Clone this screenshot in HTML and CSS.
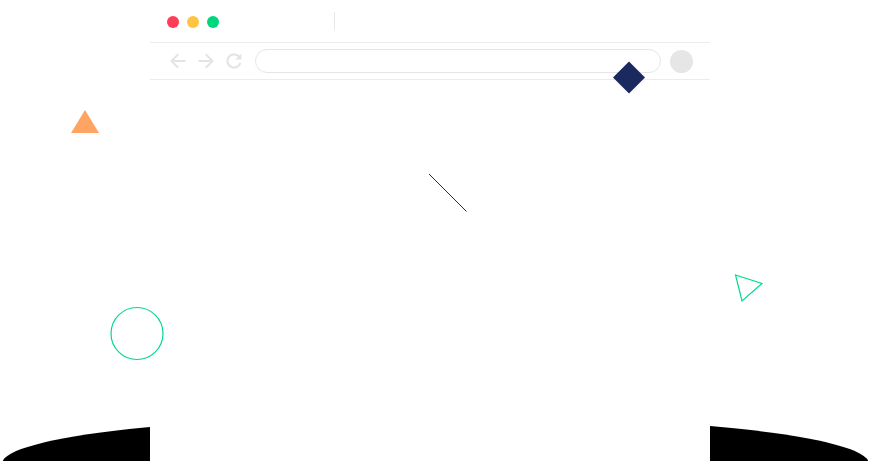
FILE: index.html
```html
<!DOCTYPE html>
<html lang="en">
<head>
<meta charset="utf-8">
<title>Browser mockup</title>
<link rel="stylesheet" href="styles.css">
</head>
<body>
<div class="stage">
  <svg class="ground" width="871" height="461" viewBox="0 0 871 461" aria-hidden="true">
    <ellipse cx="435.5" cy="463" rx="433" ry="48" fill="#000"/>
  </svg>

  <div class="browser">
    <div class="titlebar">
      <div class="dots">
        <span class="dot dot-red"></span>
        <span class="dot dot-yellow"></span>
        <span class="dot dot-green"></span>
      </div>
      <span class="tab-divider"></span>
    </div>
    <div class="toolbar">
      <div class="nav">
        <svg class="nav-icon" width="16" height="16" viewBox="0 0 16 16" aria-hidden="true">
          <path d="M15.5 8H1.5M8.2 1.3L1.5 8L8.2 14.7" fill="none" stroke="#e4e4e4" stroke-width="2"/>
        </svg>
        <svg class="nav-icon" width="16" height="16" viewBox="0 0 16 16" aria-hidden="true">
          <path d="M0.5 8H14.5M7.8 1.3L14.5 8L7.8 14.7" fill="none" stroke="#e4e4e4" stroke-width="2"/>
        </svg>
        <svg class="nav-icon" width="16" height="16" viewBox="0 0 16 16" aria-hidden="true">
          <path d="M14.4 9.8A6.6 6.6 0 1 1 13 3.6" fill="none" stroke="#e4e4e4" stroke-width="2.2"/>
          <path d="M15.4 0.6V6.6H9.4Z" fill="#e4e4e4"/>
        </svg>
      </div>
      <div class="address"></div>
      <span class="avatar"></span>
    </div>
  </div>

  <svg class="decor" width="871" height="461" viewBox="0 0 871 461" aria-hidden="true">
    <polygon points="85,110 71,133 99,133" fill="#ffa463"/>
    <polygon points="629,61.5 645,77.5 629,93.5 613,77.5" fill="#1b2a5e"/>
    <line x1="429" y1="174" x2="466.5" y2="211.5" stroke="#1b2a5e" stroke-width="1"/>
    <polygon points="735.5,275 762,283.5 742,301" fill="none" stroke="#00da8a" stroke-width="1.2"/>
    <circle cx="137" cy="333.5" r="26" fill="none" stroke="#00da8a" stroke-width="1.2"/>
  </svg>
</div>
</body>
</html>
```

FILE: styles.css
```css
html, body {
  margin: 0;
  padding: 0;
  background: #ffffff;
  overflow: hidden;
  font-family: "Liberation Sans", Arial, sans-serif;
}

.stage {
  position: relative;
  width: 871px;
  height: 461px;
  overflow: hidden;
}

.ground {
  position: absolute;
  left: 0;
  top: 0;
  z-index: 0;
}

.decor {
  position: absolute;
  left: 0;
  top: 0;
  z-index: 2;
  pointer-events: none;
}

.browser {
  position: relative;
  z-index: 1;
  margin-left: 150px;
  width: 560px;
  height: 461px;
  background: #ffffff;
  display: flex;
  flex-direction: column;
}

.titlebar {
  height: 43px;
  box-sizing: border-box;
  border-bottom: 1px solid #ececec;
  display: flex;
  align-items: flex-start;
  padding-left: 17px;
}

.dots {
  display: flex;
  gap: 8px;
  margin-top: 16px;
}

.dot {
  width: 12px;
  height: 12px;
  border-radius: 50%;
  display: block;
}

.dot-red { background: #ff3d56; }
.dot-yellow { background: #ffc542; }
.dot-green { background: #00d67c; }

.tab-divider {
  width: 1px;
  height: 18px;
  background: #e8e8e8;
  margin-top: 12px;
  margin-left: 115px;
}

.toolbar {
  height: 37px;
  box-sizing: border-box;
  border-bottom: 1px solid #ececec;
  display: flex;
  align-items: center;
  padding: 0 17px 0 20px;
}

.nav {
  display: flex;
  gap: 12px;
  align-items: center;
}

.nav-icon {
  display: block;
}

.address {
  margin-left: 13px;
  width: 404px;
  height: 22px;
  border: 1px solid #e6e6e6;
  border-radius: 12px;
}

.avatar {
  margin-left: 9px;
  width: 23px;
  height: 23px;
  border-radius: 50%;
  background: #e6e6e6;
  display: block;
}
```
